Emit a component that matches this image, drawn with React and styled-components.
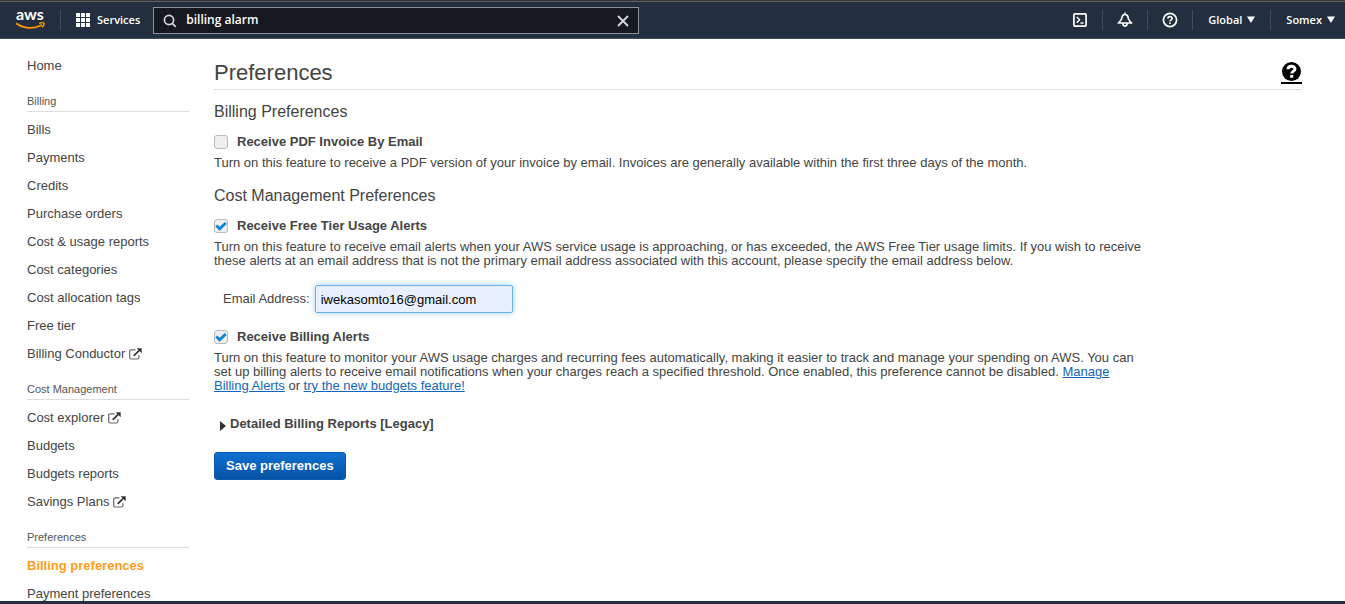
import React from 'react';
import styled, { createGlobalStyle } from 'styled-components';

const GlobalStyle = createGlobalStyle`
  * { box-sizing: border-box; }
  body {
    margin: 0;
    background: #fff;
    color: #444;
    font: 13px/14px "Liberation Sans", Arial, sans-serif;
  }
  h1, h2, p, ul { margin: 0; padding: 0; font-weight: normal; }
  ul { list-style: none; }
`;

const Page = styled.div`
  display: flex;
  flex-direction: column;
  height: 100vh;
`;

const TopBar = styled.header`
  display: flex;
  align-items: center;
  flex: none;
  height: 39px;
  padding: 0 0 0 16px;
  border-top: 1px solid #3a3535;
  border-bottom: 1px solid #414d5c;
  box-shadow: inset 0 1px 0 #5d6267;
  background: #232f3e;
  color: #fff;
  font-family: "Open Sans", "Noto Sans", sans-serif;
`;

const LogoLink = styled.a`
  display: block;
  height: 24px;
  margin-right: 15px;
`;

const Divider = styled.span`
  width: 1px;
  height: 20px;
  background: #414d5c;
`;

const BarButton = styled.button`
  display: flex;
  align-items: center;
  justify-content: center;
  gap: ${(p) => p.$gap || 5}px;
  width: ${(p) => (p.$icon ? '44px' : 'auto')};
  height: 28px;
  padding: 0 ${(p) => (p.$icon ? 0 : p.$end || 15)}px 0 ${(p) => (p.$icon ? 0 : 15)}px;
  border: 0;
  background: none;
  color: inherit;
  font: 600 11px/16px "Open Sans", "Noto Sans", sans-serif;
  svg { flex: none; }
`;

const SearchBox = styled.div`
  display: flex;
  align-items: center;
  flex: 0 1 486px;
  height: 27px;
  margin-top: 2px;
  padding: 0 9px;
  border: 1px solid #879596;
  background: #16191f;
  color: #d5dbdb;
`;

const SearchInput = styled.input`
  flex: 1;
  min-width: 0;
  padding: 0 9px 2px;
  border: 0;
  outline: 0;
  background: none;
  color: #fff;
  font: 600 12px/18px "Open Sans", "Noto Sans", sans-serif;
`;

const ClearButton = styled.button`
  display: flex;
  padding: 0;
  border: 0;
  background: none;
  color: inherit;
`;

const BarRight = styled.div`
  display: flex;
  align-items: center;
  margin-left: auto;
`;

const Body = styled.div`
  display: flex;
  flex: 1;
  gap: 25px;
  min-height: 0;
  padding: 0 43px 0 27px;
  overflow: hidden;
`;

const Sidebar = styled.nav`
  flex: none;
  width: 162px;
  padding-top: 13px;
`;

const NavTitle = styled.h2`
  margin: 13px 0 4px;
  padding-bottom: 2px;
  border-bottom: 1px solid #ddd;
  color: #555;
  font-size: 11px;
  line-height: 16px;
`;

const NavLink = styled.a`
  display: flex;
  align-items: center;
  gap: 4px;
  height: 28px;
  color: ${(p) => (p.$active ? '#ff9d1c' : '#444')};
  font-weight: ${(p) => (p.$active ? 'bold' : 'normal')};
  text-decoration: none;
  white-space: nowrap;
`;

const Main = styled.main`
  flex: 1;
  min-width: 0;
  padding-top: 20px;
`;

const TitleRow = styled.div`
  display: flex;
  justify-content: space-between;
  align-items: center;
  padding-bottom: 2px;
  border-bottom: 1px solid #ddd;
`;

const Title = styled.h1`
  font-size: 22px;
  line-height: 28px;
`;

const HelpLink = styled.a`
  display: flex;
  justify-content: center;
  width: 21px;
  padding-bottom: 1px;
  border-bottom: 2px solid #000;
  color: #000;
`;

const SectionTitle = styled.h2`
  margin: ${(p) => p.$top}px 0 12px;
  font-size: 16px;
  line-height: 20px;
`;

const CheckRow = styled.label`
  display: flex;
  align-items: center;
  gap: 9px;
  margin-bottom: 6px;
  font-weight: bold;
  line-height: 16px;
`;

const CheckHolder = styled.span`
  position: relative;
  display: block;
  width: 14px;
  height: 14px;
  svg {
    position: absolute;
    inset: 0;
    display: none;
    pointer-events: none;
  }
  input:checked + svg { display: block; }
`;

const CheckInput = styled.input`
  display: block;
  appearance: none;
  width: 14px;
  height: 14px;
  margin: 0;
  border: 1px solid #bbb;
  border-radius: 3px;
  background: #eee;
`;

const Text = styled.p`
  max-width: 932px;
`;

const TextLink = styled.a`
  color: #1166bb;
  text-decoration: underline;
`;

const EmailRow = styled.div`
  display: flex;
  align-items: center;
  gap: 5px;
  margin: 17px 0 16px 9px;
`;

const EmailInput = styled.input`
  width: 198px;
  height: 28px;
  padding: 0 5px;
  border: 1px solid #66afe9;
  border-radius: 2px;
  outline: 0;
  background: #e8f0fe;
  box-shadow: 0 0 6px rgba(102, 175, 233, 0.6);
  color: #000;
  font: 13px/16px "Liberation Sans", Arial, sans-serif;
`;

const ReportsToggle = styled.button`
  display: flex;
  align-items: center;
  gap: 4px;
  margin: 23px 0 20px;
  padding: 0 0 0 6px;
  border: 0;
  background: none;
  color: #444;
  font: bold 13px/16px "Liberation Sans", Arial, sans-serif;
  svg { margin-top: 4px; }
`;

const SaveButton = styled.button`
  height: 28px;
  padding: 0 11px;
  border: 1px solid #0a5bb0;
  border-radius: 3px;
  background: linear-gradient(#1070cf, #0452a5);
  color: #fff;
  font: bold 13px/16px "Liberation Sans", Arial, sans-serif;
`;

const BottomBar = styled.footer`
  flex: none;
  height: 3px;
  background: #232f3e;
`;

const AwsLogo = () => (
  <svg width="29" height="24" viewBox="0 0 29 24" overflow="visible" aria-hidden="true">
    <text x="0" y="12" fill="#fff" fontFamily="Lato, sans-serif" fontWeight="700" fontSize="16">aws</text>
    <path d="M0.800 15.800C8 21 18 21 25.300 17.200" fill="none" stroke="#f90" strokeWidth="1.800" strokeLinecap="round" />
    <path d="M23.600 15.300c2-1 4.100-.8 4.300-.4.3.700-.2 2.700-1.600 4.100" fill="none" stroke="#f90" strokeWidth="1.300" strokeLinecap="round" />
  </svg>
);

const GridIcon = () => (
  <svg width="14" height="14" viewBox="0 0 14 14" fill="#fff" aria-hidden="true">
    {[0, 5, 10].map((y) => [0, 5, 10].map((x) => <rect key={`${x}-${y}`} x={x} y={y} width="4" height="4" />))}
  </svg>
);

const SearchIcon = () => (
  <svg width="14" height="14" viewBox="0 0 14 14" fill="none" stroke="currentColor" strokeWidth="1.700" aria-hidden="true">
    <circle cx="6" cy="6" r="4.600" />
    <path d="M9.300 9.300l3.500 3.500" />
  </svg>
);

const CloseIcon = () => (
  <svg width="12" height="12" viewBox="0 0 12 12" fill="none" stroke="currentColor" strokeWidth="1.800" aria-hidden="true">
    <path d="M1 1l10 10M11 1L1 11" />
  </svg>
);

const ShellIcon = () => (
  <svg width="14" height="14" viewBox="0 0 14 14" fill="none" stroke="#fff" strokeWidth="1.700" strokeLinejoin="round" aria-hidden="true">
    <rect x="0.900" y="0.900" width="12.200" height="12.200" rx="1" />
    <path d="M3.700 4l3 2.800-3 2.900M7.500 10h3" strokeWidth="1.400" />
  </svg>
);

const BellIcon = () => (
  <svg width="16" height="16" viewBox="0 0 16 16" fill="none" stroke="#fff" strokeWidth="1.600" strokeLinejoin="round" aria-hidden="true">
    <path d="M8 0.500v2M8 2.500C5.800 2.500 5 4 4.800 6 4.600 8 3.500 9 1.300 11h13.400c-2.200-2-3.300-3-3.500-5C11 4 10.200 2.500 8 2.500zM5.800 11.300c0 3.700 4.400 3.700 4.400 0" />
  </svg>
);

const HelpIcon = () => (
  <svg width="16" height="16" viewBox="0 0 16 16" fill="none" stroke="#fff" strokeWidth="1.700" aria-hidden="true">
    <circle cx="8" cy="8" r="6.600" />
    <path d="M5.900 6.600c0-2.700 4.300-2.600 4.300-.2 0 1.500-2.200 1.400-2.200 3M8 10.500v1.500" strokeWidth="1.600" />
  </svg>
);

const SolidHelpIcon = () => (
  <svg width="19" height="19" viewBox="0 0 19 19" aria-hidden="true">
    <circle cx="9.500" cy="9.500" r="9.500" />
    <path d="M6 7.300c.2-4 7-3.800 7-.3 0 2.300-3.300 2-3.300 4.500M9.700 13v2.700" fill="none" stroke="#fff" strokeWidth="3" />
  </svg>
);

const Caret = () => (
  <svg width="8" height="7" viewBox="0 0 8 7" aria-hidden="true">
    <path d="M0 0.500h8L4 7z" fill="#fff" />
  </svg>
);

const ExternalIcon = () => (
  <svg width="13" height="12" viewBox="0 0 13 12" fill="none" aria-hidden="true">
    <path d="M6.500 1.800H2.300C1.200 1.800.700 2.300.700 3.300v6.200c0 1 .5 1.500 1.600 1.500h6c1.100 0 1.600-.5 1.600-1.500V7.300" stroke="#666" strokeWidth="1.200" />
    <path d="M4.700 7.800L10.500 2.200" stroke="#333" strokeWidth="1.700" />
    <path d="M7.700.3h5v5z" fill="#333" />
  </svg>
);

const TickIcon = () => (
  <svg width="14" height="14" viewBox="0 0 14 14" fill="none" aria-hidden="true">
    <path d="M2.300 6.600l3.400 3.200 6-5.800" stroke="#0a84d6" strokeWidth="2.800" />
  </svg>
);

const CheckField = ({ label, checked }) => (
  <CheckRow>
    <CheckHolder>
      <CheckInput type="checkbox" defaultChecked={checked} />
      <TickIcon />
    </CheckHolder>
    {label}
  </CheckRow>
);

const groups = [
  { items: [{ name: 'Home' }] },
  {
    title: 'Billing',
    items: [
      { name: 'Bills' },
      { name: 'Payments' },
      { name: 'Credits' },
      { name: 'Purchase orders' },
      { name: 'Cost & usage reports' },
      { name: 'Cost categories' },
      { name: 'Cost allocation tags' },
      { name: 'Free tier' },
      { name: 'Billing Conductor', external: true },
    ],
  },
  {
    title: 'Cost Management',
    items: [
      { name: 'Cost explorer', external: true },
      { name: 'Budgets' },
      { name: 'Budgets reports' },
      { name: 'Savings Plans', external: true },
    ],
  },
  {
    title: 'Preferences',
    items: [{ name: 'Billing preferences', active: true }, { name: 'Payment preferences' }],
  },
];

export default function App() {
  return (
    <Page>
      <GlobalStyle />
      <TopBar>
        <LogoLink href="#" aria-label="AWS home"><AwsLogo /></LogoLink>
        <Divider />
        <BarButton $gap={7} $end={13}><GridIcon />Services</BarButton>
        <SearchBox>
          <SearchIcon />
          <SearchInput type="text" aria-label="Search" defaultValue="billing alarm" />
          <ClearButton aria-label="Clear search"><CloseIcon /></ClearButton>
        </SearchBox>
        <BarRight>
          <BarButton $icon aria-label="CloudShell"><ShellIcon /></BarButton>
          <Divider />
          <BarButton $icon aria-label="Notifications"><BellIcon /></BarButton>
          <Divider />
          <BarButton $icon aria-label="Support"><HelpIcon /></BarButton>
          <Divider />
          <BarButton>Global<Caret /></BarButton>
          <Divider />
          <BarButton $end={10}>Somex<Caret /></BarButton>
        </BarRight>
      </TopBar>
      <Body>
        <Sidebar>
          {groups.map((group) => (
            <React.Fragment key={group.title || 'top'}>
              {group.title && <NavTitle>{group.title}</NavTitle>}
              <ul>
                {group.items.map((item) => (
                  <li key={item.name}>
                    <NavLink href="#" $active={item.active}>
                      {item.name}
                      {item.external && <ExternalIcon />}
                    </NavLink>
                  </li>
                ))}
              </ul>
            </React.Fragment>
          ))}
        </Sidebar>
        <Main>
          <TitleRow>
            <Title>Preferences</Title>
            <HelpLink href="#" aria-label="Help"><SolidHelpIcon /></HelpLink>
          </TitleRow>
          <SectionTitle $top={12}>Billing Preferences</SectionTitle>
          <CheckField label="Receive PDF Invoice By Email" />
          <Text>
            Turn on this feature to receive a PDF version of your invoice by email. Invoices are generally available
            within the first three days of the month.
          </Text>
          <SectionTitle $top={16}>Cost Management Preferences</SectionTitle>
          <CheckField label="Receive Free Tier Usage Alerts" checked />
          <Text>
            Turn on this feature to receive email alerts when your AWS service usage is approaching, or has exceeded,
            the AWS Free Tier usage limits. If you wish to receive these alerts at an email address that is not the
            primary email address associated with this account, please specify the email address below.
          </Text>
          <EmailRow>
            <label htmlFor="email">Email Address:</label>
            <EmailInput id="email" type="email" defaultValue="iwekasomto16@gmail.com" />
          </EmailRow>
          <CheckField label="Receive Billing Alerts" checked />
          <Text>
            Turn on this feature to monitor your AWS usage charges and recurring fees automatically, making it easier
            to track and manage your spending on AWS. You can set up billing alerts to receive email notifications
            when your charges reach a specified threshold. Once enabled, this preference cannot be
            disabled. <TextLink href="#">Manage Billing Alerts</TextLink> or{' '}
            <TextLink href="#">try the new budgets feature!</TextLink>
          </Text>
          <ReportsToggle aria-expanded="false">
            <svg width="6" height="10" viewBox="0 0 6 10" aria-hidden="true"><path d="M0 0l6 5-6 5z" fill="#333" /></svg>
            Detailed Billing Reports [Legacy]
          </ReportsToggle>
          <SaveButton>Save preferences</SaveButton>
        </Main>
      </Body>
      <BottomBar />
    </Page>
  );
}
